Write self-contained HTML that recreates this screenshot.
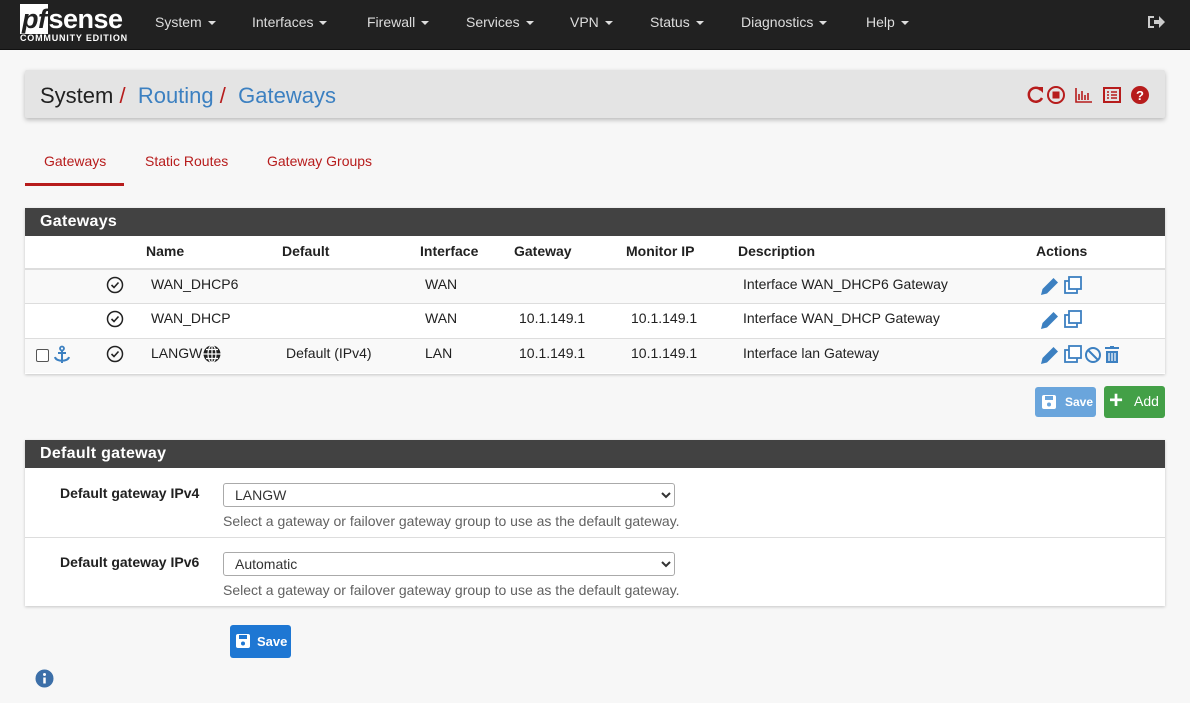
<!DOCTYPE html>
<html><head><meta charset="utf-8"><style>
*{box-sizing:border-box;margin:0;padding:0}
body{width:1190px;height:703px;background:#f7f7f7;font-family:"Liberation Sans",Arial,sans-serif;font-size:14px;color:#212121;position:relative;overflow:hidden}
.nav{position:absolute;left:0;top:0;width:1190px;height:50px;background:#212121;border-bottom:1px solid #111}
.nav .it{position:absolute;top:14px;color:#ddd;font-size:14px}
.caret{display:inline-block;border-top:4px solid #ddd;border-left:4px solid transparent;border-right:4px solid transparent;margin-left:6px;vertical-align:middle}
.logo{position:absolute;left:20px;top:5px;color:#fff}
.bc{position:absolute;left:25px;top:70px;width:1140px;height:48px;background:#e4e4e4;box-shadow:0 2px 5px rgba(0,0,0,.25);border-radius:2px}
.bc .t{position:absolute;left:15px;top:12px;font-size:21px}
.blue{color:#3c80c1}.red{color:#b71c1c}
.tabs{position:absolute;top:153px;font-size:14px;color:#b71c1c}
.panel{position:absolute;left:25px;width:1140px;background:#fff;box-shadow:0 1px 3px rgba(0,0,0,.2)}
.ph{background:#424242;color:#fff;font-weight:bold;font-size:16px;height:28px;line-height:28px;padding-left:15px;letter-spacing:.3px}
.row{position:absolute;left:0;width:1140px;border-top:1px solid #ddd;height:35px}
.c{position:absolute;top:6px;font-size:14px}
.hd{font-weight:bold}
.btn{position:absolute;border-radius:3px;color:#fff;font-size:13px}
select{position:absolute;width:452px;height:24px;border:1px solid #aaa;border-radius:3px;background:#fff;font-family:inherit;font-size:14px;padding-left:7px;color:#333;appearance:auto}
.help{position:absolute;left:198px;font-size:14px;color:#616161}
.lbl{position:absolute;left:35px;font-weight:bold;font-size:14px}
</style></head><body>
<div class="nav">
 <div class="logo"><div style="font-size:27px;font-weight:bold;line-height:28px;letter-spacing:-.5px"><span style="background:#fff;color:#212121;font-style:italic;padding:0 2px">pf</span>sense</div><div style="font-size:9px;font-weight:bold;letter-spacing:.8px;margin-top:0px">COMMUNITY EDITION</div></div>
 <span class="it" style="left:155px">System<span class="caret"></span></span>
 <span class="it" style="left:252px">Interfaces<span class="caret"></span></span>
 <span class="it" style="left:367px">Firewall<span class="caret"></span></span>
 <span class="it" style="left:466px">Services<span class="caret"></span></span>
 <span class="it" style="left:570px">VPN<span class="caret"></span></span>
 <span class="it" style="left:650px">Status<span class="caret"></span></span>
 <span class="it" style="left:741px">Diagnostics<span class="caret"></span></span>
 <span class="it" style="left:866px">Help<span class="caret"></span></span>
 <svg style="position:absolute;left:1146px;top:13px" width="20" height="18" viewBox="0 0 20 18"><path d="M2 3h6v2H4v8h4v2H2z" fill="#ccc"/><path d="M8 7h5V3l6 6-6 6v-4H8z" fill="#ccc"/></svg>
</div>
<div class="bc"><div class="t" style="top:13px;font-size:22px">System <span class="red">/</span>&nbsp; <span class="blue">Routing</span> <span class="red">/</span>&nbsp; <span class="blue">Gateways</span></div>
 <svg style="position:absolute;left:1000px;top:15px" width="125" height="20" viewBox="0 0 125 20">
  <g fill="none" stroke="#b71c1c" stroke-width="2.5"><path d="M16 5A7 7 0 1 0 17 13"/></g><path d="M12 2l6 0 0 6z" fill="#b71c1c"/>
  <circle cx="31" cy="10" r="8" fill="none" stroke="#b71c1c" stroke-width="2"/><rect x="27.5" y="6.5" width="7" height="7" fill="#b71c1c"/>
  <path d="M51 3v14h16M54 9v6M57 6v9M60 10v5M63 8v7" stroke="#b71c1c" stroke-width="1.6" fill="none"/>
  <rect x="79" y="3" width="16" height="14" fill="none" stroke="#b71c1c" stroke-width="2"/><path d="M82 7h2M86 7h6M82 10h2M86 10h6M82 13h2M86 13h6" stroke="#b71c1c" stroke-width="1.6"/>
  <circle cx="115" cy="10" r="9" fill="#b71c1c"/><text x="115" y="15" font-size="13" font-weight="bold" fill="#fff" text-anchor="middle" font-family="Liberation Sans">?</text>
 </svg>
</div>
<div class="tabs" style="left:44px">Gateways</div>
<div style="position:absolute;left:25px;top:183px;width:99px;height:3px;background:#b71c1c"></div>
<div class="tabs" style="left:145px">Static Routes</div>
<div class="tabs" style="left:267px">Gateway Groups</div>

<div class="panel" style="top:208px;height:166px">
 <div class="ph">Gateways</div>
 <div class="row hd" style="top:28px;border-top:none;height:32px">
  <span class="c" style="left:121px;top:7px">Name</span><span class="c" style="left:257px;top:7px">Default</span><span class="c" style="left:395px;top:7px">Interface</span><span class="c" style="left:489px;top:7px">Gateway</span><span class="c" style="left:601px;top:7px">Monitor IP</span><span class="c" style="left:713px;top:7px">Description</span><span class="c" style="left:1011px;top:7px">Actions</span>
 </div>
 <div class="row" style="top:60px;border-top:2px solid #ddd;background:#f9f9f9">
  <svg class="c" style="left:81px;top:6px" width="18" height="18"><circle cx="9" cy="9" r="7.5" fill="none" stroke="#222" stroke-width="1.5"/><path d="M5.5 9l2.5 2.5 4.5-5" fill="none" stroke="#222" stroke-width="1.6"/></svg>
  <span class="c" style="left:126px">WAN_DHCP6</span><span class="c" style="left:400px">WAN</span><span class="c" style="left:718px">Interface WAN_DHCP6 Gateway</span>
  <svg class="c" style="left:1015px;top:5px" width="45" height="22"><path d="M1 20l1.5-6 11-11 4.5 4.5-11 11z" fill="#3c80c1"/><rect x="25" y="6" width="12" height="12" fill="#fff" stroke="#3c80c1" stroke-width="1.8"/><rect x="29" y="2" width="12" height="12" fill="#fff" stroke="#3c80c1" stroke-width="1.8"/></svg>
 </div>
 <div class="row" style="top:95px">
  <svg class="c" style="left:81px;top:6px" width="18" height="18"><circle cx="9" cy="9" r="7.5" fill="none" stroke="#222" stroke-width="1.5"/><path d="M5.5 9l2.5 2.5 4.5-5" fill="none" stroke="#222" stroke-width="1.6"/></svg>
  <span class="c" style="left:126px">WAN_DHCP</span><span class="c" style="left:400px">WAN</span><span class="c" style="left:494px">10.1.149.1</span><span class="c" style="left:606px">10.1.149.1</span><span class="c" style="left:718px">Interface WAN_DHCP Gateway</span>
  <svg class="c" style="left:1015px;top:5px" width="45" height="22"><path d="M1 20l1.5-6 11-11 4.5 4.5-11 11z" fill="#3c80c1"/><rect x="25" y="6" width="12" height="12" fill="#fff" stroke="#3c80c1" stroke-width="1.8"/><rect x="29" y="2" width="12" height="12" fill="#fff" stroke="#3c80c1" stroke-width="1.8"/></svg>
 </div>
 <div class="row" style="top:130px;background:#f9f9f9">
  <span class="c" style="left:11px;top:10px;width:13px;height:13px;border:1px solid #555;border-radius:2px;background:#fff"></span>
  <svg class="c" style="left:27px;top:6px" width="20" height="20"><circle cx="10" cy="3.5" r="2" fill="none" stroke="#3c80c1" stroke-width="1.8"/><path d="M10 5v13M6 8h8M3 12c1 5 13 5 14 0" fill="none" stroke="#3c80c1" stroke-width="2"/></svg>
  <svg class="c" style="left:81px;top:6px" width="18" height="18"><circle cx="9" cy="9" r="7.5" fill="none" stroke="#222" stroke-width="1.5"/><path d="M5.5 9l2.5 2.5 4.5-5" fill="none" stroke="#222" stroke-width="1.6"/></svg>
  <span class="c" style="left:126px">LANGW</span>
  <svg class="c" style="left:178px;top:6px" width="18" height="18"><circle cx="9" cy="9" r="8.5" fill="#222"/><path d="M0.5 9h17M9 .5v17M3 4.5h12M3 13.5h12" stroke="#fff" stroke-width="1.2"/><ellipse cx="9" cy="9" rx="4" ry="8.5" fill="none" stroke="#fff" stroke-width="1.2"/></svg>
  <span class="c" style="left:261px">Default (IPv4)</span><span class="c" style="left:400px">LAN</span><span class="c" style="left:494px">10.1.149.1</span><span class="c" style="left:606px">10.1.149.1</span><span class="c" style="left:718px">Interface lan Gateway</span>
  <svg class="c" style="left:1015px;top:5px" width="90" height="22"><path d="M1 20l1.5-6 11-11 4.5 4.5-11 11z" fill="#3c80c1"/><rect x="25" y="6" width="12" height="12" fill="#fff" stroke="#3c80c1" stroke-width="1.8"/><rect x="29" y="2" width="12" height="12" fill="#fff" stroke="#3c80c1" stroke-width="1.8"/><circle cx="53" cy="11" r="7" fill="none" stroke="#3c80c1" stroke-width="2"/><path d="M48 6l10 10" stroke="#3c80c1" stroke-width="2"/><path d="M65 4h14M70 3h4" stroke="#3c80c1" stroke-width="2"/><path d="M66 7h12v12H66z" fill="#3c80c1"/><path d="M69 9v8M72 9v8M75 9v8" stroke="#fff" stroke-width="1.2"/></svg>
 </div>
</div>

<div class="btn" style="left:1035px;top:387px;width:61px;height:30px;background:#6aa5dc">
 <svg style="position:absolute;left:6px;top:7px" width="16" height="16"><rect x="1" y="1" width="14" height="14" rx="2" fill="#fff"/><rect x="4" y="2" width="8" height="4" fill="#6aa5dc"/><circle cx="8" cy="10.5" r="2" fill="#6aa5dc"/></svg>
 <span style="position:absolute;left:30px;top:8px;font-size:12px;font-weight:bold">Save</span></div>
<div class="btn" style="left:1104px;top:386px;width:61px;height:32px;background:#43a047">
 <span style="position:absolute;left:5px;top:2px;font-size:24px;font-weight:bold;line-height:26px">+</span>
 <span style="position:absolute;left:30px;top:7px;font-size:14px">Add</span></div>

<div class="panel" style="top:440px;height:166px">
 <div class="ph">Default gateway</div>
 <div class="lbl" style="top:45px">Default gateway IPv4</div>
 <select style="left:198px;top:43px"><option>LANGW</option></select>
 <div class="help" style="top:73px">Select a gateway or failover gateway group to use as the default gateway.</div>
 <div style="position:absolute;left:0;top:97px;width:1140px;border-top:1px solid #ddd"></div>
 <div class="lbl" style="top:114px">Default gateway IPv6</div>
 <select style="left:198px;top:112px"><option>Automatic</option></select>
 <div class="help" style="top:142px">Select a gateway or failover gateway group to use as the default gateway.</div>
</div>
<div class="btn" style="left:230px;top:625px;width:61px;height:33px;background:#1e77d3">
 <svg style="position:absolute;left:5px;top:8px" width="16" height="16"><rect x="1" y="1" width="14" height="14" rx="2" fill="#fff"/><rect x="4" y="2" width="8" height="4" fill="#1e77d3"/><circle cx="8" cy="10.5" r="2" fill="#1e77d3"/></svg>
 <span style="position:absolute;left:27px;top:9px;font-size:13px;font-weight:bold">Save</span></div>
<svg style="position:absolute;left:35px;top:669px" width="19" height="19"><circle cx="9.5" cy="9.5" r="9" fill="#3c6fa8"/><circle cx="9.5" cy="5.5" r="1.5" fill="#fff"/><path d="M9.5 8.5v6" stroke="#fff" stroke-width="2.5"/></svg>
</body></html>
